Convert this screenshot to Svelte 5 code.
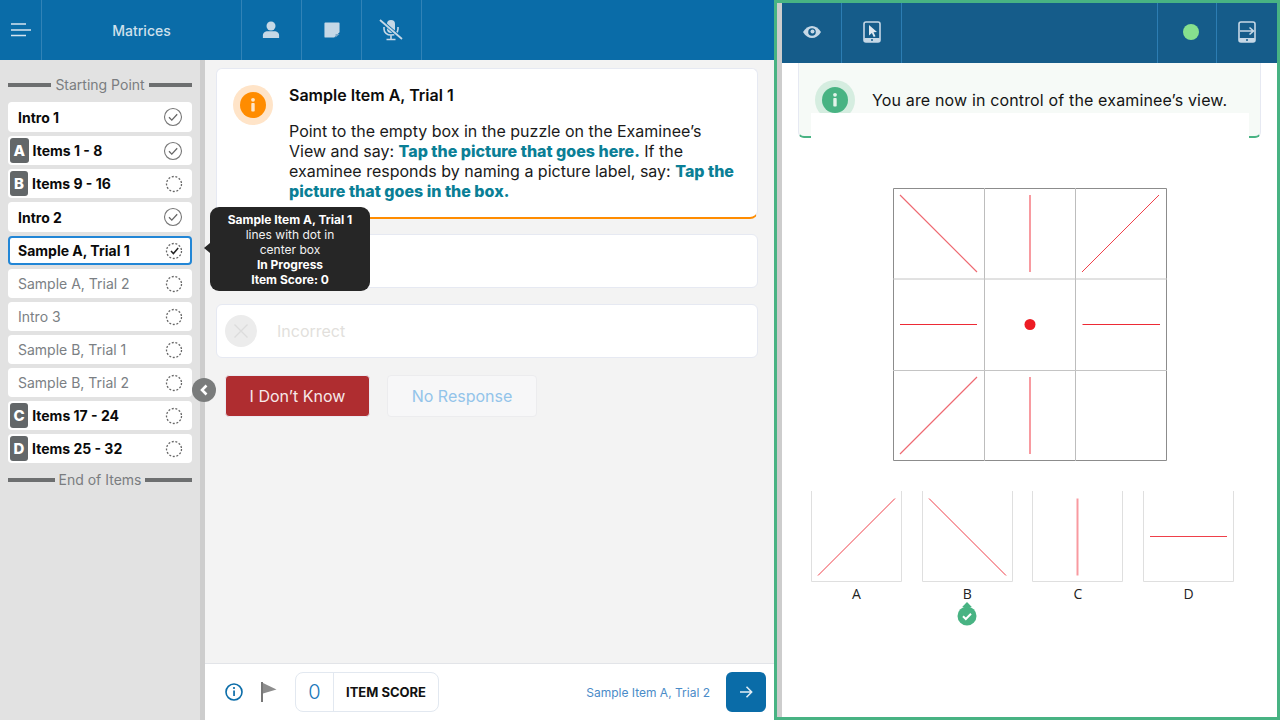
<script lang="ts">
  type Row = { label: string; badge?: string; state: "done" | "todo" | "current"; tone: "strong" | "muted" };

  const rows: Row[] = [
    { label: "Intro 1", state: "done", tone: "strong" },
    { label: "Items 1 - 8", badge: "A", state: "done", tone: "strong" },
    { label: "Items 9 - 16", badge: "B", state: "todo", tone: "strong" },
    { label: "Intro 2", state: "done", tone: "strong" },
    { label: "Sample A, Trial 1", state: "current", tone: "strong" },
    { label: "Sample A, Trial 2", state: "todo", tone: "muted" },
    { label: "Intro 3", state: "todo", tone: "muted" },
    { label: "Sample B, Trial 1", state: "todo", tone: "muted" },
    { label: "Sample B, Trial 2", state: "todo", tone: "muted" },
    { label: "Items 17 - 24", badge: "C", state: "todo", tone: "strong" },
    { label: "Items 25 - 32", badge: "D", state: "todo", tone: "strong" }
  ];

  const choices = [
    { label: "A", x1: 7, y1: 84.5, x2: 84, y2: 7.5 },
    { label: "B", x1: 7, y1: 7.5, x2: 84, y2: 84.5 },
    { label: "C", x1: 45.5, y1: 7.5, x2: 45.5, y2: 84.5 },
    { label: "D", x1: 7, y1: 45.5, x2: 84, y2: 45.5 }
  ];

  // the plain section rows sit one pixel taller than the rest
  const isTall = (r: Row) => r.tone === "strong" && !r.badge && r.state !== "current";
</script>

<div class="page">
  <section class="left">
    <header class="topbar">
      <div class="cell burger">
        <svg width="22" height="16" viewBox="0 0 22 16">
          <path d="M1 2h15M1 8h20M1 13.500h15" stroke="#d5e4ef" stroke-width="1.700" fill="none" />
        </svg>
      </div>
      <div class="cell title">Matrices</div>
      <div class="cell icon">
        <svg class="shift-l" width="18" height="18" viewBox="0 0 20 20" fill="#c6d8e6">
          <circle cx="10" cy="5.500" r="5" />
          <path d="M1 19v-3c0-3 3-4.500 5-4.500h8c2 0 5 1.500 5 4.500v3z" />
        </svg>
      </div>
      <div class="cell icon">
        <svg width="16" height="16" viewBox="0 0 18 18">
          <path d="M1.500 0.500h15a1 1 0 0 1 1 1v10l-6 6h-10a1 1 0 0 1-1-1v-15a1 1 0 0 1 1-1z" fill="#c6d8e6" />
          <path d="M13 17.500v-4h4.500z" fill="#7fa9c8" />
        </svg>
      </div>
      <div class="cell icon">
        <svg class="shift-l" width="26" height="22" viewBox="0 0 26 22" fill="none">
          <rect x="9" y="1" width="8" height="13" rx="4" fill="#c6d8e6" />
          <path d="M6 8v2c0 3.500 3 6 7 6s7-2.500 7-6V8M13 16v4M8.500 20.500h9" stroke="#c6d8e6" stroke-width="1.600" />
          <path d="M2 1l22 19" stroke="#0a6ca8" stroke-width="3.600" />
          <path d="M2 1l22 19" stroke="#c6d8e6" stroke-width="1.800" />
        </svg>
      </div>
    </header>

    <div class="body">
      <aside class="sidebar">
        <div class="rule rule-top"><span>Starting Point</span></div>
        <ul class="rows">
          {#each rows as r}
            <li class={"row " + r.tone + (r.state === "current" ? " active" : "") + (r.badge ? " has-badge" : "") + (isTall(r) ? " tall" : "")}>
              {#if r.badge}<span class="badge">{r.badge}</span>{/if}
              <span class="row-label">{r.label}</span>
              <svg class="status" width="20" height="20" viewBox="0 0 20 20" fill="none">
                {#if r.state === "done"}
                  <circle cx="10" cy="10" r="8.500" stroke="#777" stroke-width="1.100" />
                  <path d="M6 10.300l2.800 2.800 5.400-5.800" stroke="#666" stroke-width="1.300" />
                {:else}
                  <circle cx="11" cy="10" r="7.500" stroke="#666" stroke-width="1.300" stroke-dasharray="2 1.650" />
                  {#if r.state === "current"}
                    <path d="M8 10l2.400 2.600 4.800-5.600" stroke="#222" stroke-width="1.500" />
                  {/if}
                {/if}
              </svg>
            </li>
          {/each}
        </ul>
        <div class="rule rule-end"><span>End of Items</span></div>
      </aside>

      <main class="main">
        <div class="scroll">
          <article class="card prompt">
            <span class="halo orange">
              <svg width="26" height="26" viewBox="0 0 26 26">
                <circle cx="13" cy="13" r="13" fill="#ff8c00" />
                <rect x="11.300" y="11" width="3.400" height="8.500" rx="0.800" fill="#ffe6c8" />
                <circle cx="13" cy="7.800" r="1.900" fill="#ffe6c8" />
              </svg>
            </span>
            <div class="prompt-text">
              <h2>Sample Item A, Trial 1</h2>
              <p>Point to the empty box in the puzzle on the Examinee’s View and say: <b>Tap the picture that goes here.</b> If the examinee responds by naming a picture label, say: <b>Tap the picture that goes in the box.</b></p>
            </div>
          </article>

          <div class="card answer"></div>

          <div class="card answer incorrect">
            <span class="disc">
              <svg width="16" height="16" viewBox="0 0 16 16">
                <path d="M1.500 1.500l13 13M14.500 1.500l-13 13" stroke="#dcdcdc" stroke-width="1.400" />
              </svg>
            </span>
            <span class="answer-label">Incorrect</span>
          </div>

          <div class="actions">
            <button class="btn dont-know">I Don’t Know</button>
            <button class="btn no-response">No Response</button>
          </div>
        </div>

        <footer class="footer">
          <svg width="18" height="18" viewBox="0 0 18 18" fill="none">
            <circle cx="9" cy="9" r="8" stroke="#0a6ca8" stroke-width="1.600" />
            <rect x="8.200" y="7.500" width="1.700" height="5.500" fill="#0a6ca8" />
            <circle cx="9" cy="5" r="1.100" fill="#0a6ca8" />
          </svg>
          <svg class="flag" width="16" height="20" viewBox="0 0 16 20">
            <rect x="0" y="0" width="2" height="20" fill="#777" />
            <path d="M2 1l13.500 6.500-13.500 4z" fill="#8d8d8d" />
          </svg>
          <div class="score">
            <span class="score-value">0</span>
            <span class="score-label">ITEM SCORE</span>
          </div>
          <span class="next-label">Sample Item A, Trial 2</span>
          <button class="next" aria-label="Next">
            <svg width="14" height="14" viewBox="0 0 14 14" fill="none">
              <path d="M1 7h11.500M7.500 1.800L12.700 7l-5.200 5.200" stroke="#e4eef5" stroke-width="1.500" />
            </svg>
          </button>
        </footer>
      </main>
    </div>

    <div class="tooltip">
      <b>Sample Item A, Trial 1</b>
      <span>lines with dot in</span>
      <span>center box</span>
      <b>In Progress</b>
      <b>Item Score: 0</b>
    </div>
    <button class="collapse" aria-label="Collapse">
      <svg width="10" height="12" viewBox="0 0 10 12" fill="none">
        <path d="M7.500 1.500L3 6l4.500 4.500" stroke="#fff" stroke-width="2.600" />
      </svg>
    </button>
  </section>

  <section class="right">
    <div class="inner">
      <header class="topbar2">
        <div class="cell2">
          <svg width="18" height="12" viewBox="0 0 18 12">
            <path d="M0 6C2.500 2 5.500 0 9 0s6.500 2 9 6c-2.500 4-5.500 6-9 6s-6.500-2-9-6z" fill="#c6d8e6" />
            <circle cx="9" cy="6" r="3.800" fill="#155c8a" />
            <circle cx="9.500" cy="5.500" r="2" fill="#c6d8e6" />
          </svg>
        </div>
        <div class="cell2">
          <svg width="18" height="22" viewBox="0 0 18 22">
            <rect x="1" y="1" width="16" height="20" rx="2" fill="none" stroke="#c6d8e6" stroke-width="1.600" />
            <rect x="1" y="17" width="16" height="4" rx="1" fill="#c6d8e6" />
            <circle cx="9" cy="19" r="1" fill="#155c8a" />
            <path d="M6 4l8 7-3.500.3 2 4-1.800.8-1.800-4-2.900 2.400z" fill="#e0e9f0" />
          </svg>
        </div>
        <div class="spacer"></div>
        <div class="cell2 live"><span class="dot"></span></div>
        <div class="cell2 last">
          <svg width="18" height="22" viewBox="0 0 18 22" fill="none">
            <rect x="1" y="1" width="16" height="20" rx="2" stroke="#c6d8e6" stroke-width="1.600" />
            <rect x="1" y="17" width="16" height="4" rx="1" fill="#c6d8e6" />
            <circle cx="9" cy="19" r="1" fill="#155c8a" />
            <path d="M2 10h13.500M11.500 6.500L15.500 10l-4 3.500" stroke="#c6d8e6" stroke-width="1.600" />
          </svg>
        </div>
      </header>

      <div class="stage">
        <div class="banner">
          <span class="halo green">
            <svg width="26" height="26" viewBox="0 0 26 26">
              <circle cx="13" cy="13" r="13" fill="#48b383" />
              <rect x="11.300" y="11" width="3.400" height="8.500" rx="0.800" fill="#e3f4ea" />
              <circle cx="13" cy="7.800" r="1.900" fill="#e3f4ea" />
            </svg>
          </span>
          <span class="banner-text">You are now in control of the examinee’s view.</span>
          <div class="banner-mask"></div>
        </div>

        <svg class="puzzle" width="276" height="275" viewBox="892 187 276 275" fill="none">
          <path d="M893.500 188.500h273v272h-273z" stroke="#8c8c8c" />
          <path d="M984.500 188v273M1075.500 188v273" stroke="#bdbdbd" />
          <path d="M893 279h274M893 370.500h274" stroke="#c4c4c4" />
          <g stroke="#ed2a35">
            <path d="M900 195l77 77M900 454l77-77" stroke="#ee6a72" stroke-width="1.200" />
            <path d="M1082 272l77-77" stroke-width="0.900" />
            <path d="M1030 195v77M1030 377v77" stroke="#f89aa0" stroke-width="2" />
            <path d="M900 324.500h77M1082.500 324.500h77.500" stroke-width="1.200" />
          </g>
          <circle cx="1030" cy="324.500" r="5.500" fill="#ed1c24" />
        </svg>

        <div class="choices">
          {#each choices as c}
            <div class="choice">
              <svg width="91" height="91" viewBox="0 0 91 91" fill="none">
                <path d="M0.500 0v90.500h90V0" stroke="#dfdfdf" />
                <line x1={c.x1} y1={c.y1} x2={c.x2} y2={c.y2} stroke={c.label === "C" ? "#f89aa0" : "#ed2a35"} stroke-width={c.label === "C" ? 2 : 0.9} />
              </svg>
              <span class="choice-label">{c.label}</span>
              {#if c.label === "B"}
                <svg class="picked" width="20" height="24" viewBox="0 0 20 24">
                  <path d="M10 0l4.800 5h-9.600z" fill="#48b383" />
                  <circle cx="10" cy="14" r="9.500" fill="#48b383" />
                  <path d="M6 14.300l2.800 2.700 5.200-5.200" stroke="#fff" stroke-width="2" fill="none" />
                </svg>
              {/if}
            </div>
          {/each}
        </div>
      </div>
    </div>
  </section>
</div>

<style>
  :global(body) {
    margin: 0;
    font-family: Inter, "Liberation Sans", sans-serif;
    color: #111;
    overflow: hidden;
  }

  .page {
    width: 1280px;
    height: 720px;
    display: flex;
    overflow: hidden;
  }

  .left {
    position: relative;
    width: 774px;
    height: 720px;
    display: flex;
    flex-direction: column;
    flex: none;
  }

  .topbar {
    height: 60px;
    flex: none;
    display: flex;
    background: #0a6ca8;
  }
  .cell {
    display: flex;
    align-items: center;
    justify-content: center;
    border-right: 1px solid #3183b7;
    box-sizing: border-box;
  }
  .burger { width: 42px; }
  .title { width: 200px; color: #cfe0ec; font-size: 14px; font-weight: 500; }
  .icon { width: 60px; }
  .shift-l { margin-right: 2px; }

  .body { flex: 1; display: flex; min-height: 0; }

  .sidebar {
    flex: none;
    background: #e2e2e2;
    border-right: 5px solid #cdcdcd;
    padding: 16px 8px 0;
    box-sizing: content-box;
    width: 184px;
  }

  .rule {
    display: flex;
    align-items: center;
    gap: 4px;
    color: #7a7d80;
    font-size: 14px;
    line-height: 17px;
    white-space: nowrap;
  }
  .rule::before, .rule::after {
    content: "";
    flex: 1;
    height: 4px;
    background: #6d6f70;
  }
  .rule-end { margin-top: 8px; }

  .rows {
    list-style: none;
    margin: 9px 0 0;
    padding: 0;
    display: flex;
    flex-direction: column;
    gap: 4px;
  }
  .row {
    height: 29px;
    box-sizing: border-box;
    background: #fff;
    border-radius: 4px;
    display: flex;
    align-items: center;
    padding-left: 10px;
    font-size: 14px;
    position: relative;
  }
  .row.tall { height: 30px; }
  .row.strong { font-weight: 700; color: #0a0a0a; }
  .row.muted { color: #7b7f84; }
  .row.active { border: 2px solid #2286d6; padding-left: 8px; }
  .row.has-badge { padding-left: 2px; }
  .status { margin-left: auto; margin-right: 9px; }
  .row.active .status { margin-right: 7px; }

  .badge {
    align-self: stretch;
    margin: 2px 4px 2px 0;
    padding: 0 3.500px;
    min-width: 11px;
    background: #636769;
    border-radius: 3px;
    color: #fff;
    font-size: 15px;
    font-weight: 800;
    display: flex;
    align-items: center;
    justify-content: center;
  }

  .main {
    flex: 1;
    background: #f3f3f3;
    display: flex;
    flex-direction: column;
    min-width: 0;
  }
  .scroll {
    flex: 1;
    padding: 8px 16px 0 11px;
    display: flex;
    flex-direction: column;
    gap: 15px;
  }

  .card {
    background: #fff;
    border: 1px solid #e6e9f2;
    border-radius: 6px;
    box-sizing: border-box;
  }
  .prompt {
    height: 151px;
    display: flex;
    padding: 16px 20px 0 16px;
    gap: 16px;
    border-bottom: 2px solid #ff8c00;
    border-bottom-right-radius: 8px;
  }
  .halo {
    width: 40px;
    height: 40px;
    border-radius: 50%;
    flex: none;
    display: flex;
    align-items: center;
    justify-content: center;
  }
  .halo.orange { background: #ffe4c8; }
  .halo.green { background: #d5ede0; }
  .prompt-text h2 {
    margin: 0;
    font-size: 16px;
    font-weight: 600;
    line-height: 20px;
    color: #0c0c0c;
  }
  .prompt-text p {
    margin: 16px 0 0;
    font-size: 16px;
    line-height: 20px;
    color: #1a1a1a;
  }
  .prompt-text b { color: #0b7f96; font-weight: 800; }

  .answer {
    height: 54px;
    display: flex;
    align-items: center;
    padding-left: 8px;
  }
  .answer.incorrect { margin-top: 1px; }
  .disc {
    width: 32px;
    height: 32px;
    border-radius: 50%;
    background: #ececec;
    display: flex;
    align-items: center;
    justify-content: center;
    flex: none;
  }
  .answer-label { margin-left: 20px; font-size: 16px; color: #e2dfdc; font-weight: 400; }

  .actions {
    display: flex;
    gap: 17px;
    padding-left: 9px;
    margin-top: 2px;
  }
  .btn {
    height: 42px;
    font: inherit;
    font-size: 16px;
    border-radius: 4px;
    box-sizing: border-box;
  }
  .dont-know {
    width: 145px;
    background: #af2d30;
    color: #f6e8e8;
    border: 1px solid #eceaf2;
  }
  .no-response {
    width: 150px;
    background: #f7f7f8;
    color: #93c4ea;
    border: 1px solid #ececee;
  }

  .footer {
    height: 57px;
    flex: none;
    background: #fff;
    border-top: 1px solid #e2e4e8;
    box-sizing: border-box;
    display: flex;
    align-items: center;
    padding: 0 8px 0 20px;
  }
  .flag { margin-left: 18px; }
  .score {
    margin-left: 18px;
    width: 144px;
    height: 40px;
    border: 1px solid #e2e8f0;
    border-radius: 8px;
    box-sizing: border-box;
    display: flex;
    align-items: center;
  }
  .score-value {
    width: 37px;
    height: 100%;
    border-right: 1px solid #e2e8f0;
    display: flex;
    align-items: center;
    justify-content: center;
    font-size: 20px;
    color: #1a78ba;
    font-weight: 300;
  }
  .score-label { margin-left: 12px; font-size: 13px; font-weight: 700; color: #111; }
  .next-label { margin-left: auto; font-size: 12px; color: #4a8bc8; margin-right: 16px; }
  .next {
    width: 40px;
    height: 40px;
    border: 0;
    border-radius: 6px;
    background: #0a6ca8;
    display: flex;
    align-items: center;
    justify-content: center;
    padding: 0;
  }

  .tooltip {
    position: absolute;
    left: 210px;
    top: 207px;
    width: 160px;
    height: 84px;
    box-sizing: border-box;
    padding: 5px 6px;
    background: #262626;
    border-radius: 9px;
    color: #f2f2f2;
    font-size: 12px;
    line-height: 15px;
    display: flex;
    flex-direction: column;
    align-items: center;
    white-space: nowrap;
  }
  .tooltip b { font-weight: 700; color: #fff; }
  .tooltip::before {
    content: "";
    position: absolute;
    left: -6px;
    top: 36px;
    border-style: solid;
    border-width: 5px 6px 5px 0;
    border-color: transparent #262626 transparent transparent;
  }

  .collapse {
    position: absolute;
    left: 192px;
    top: 378px;
    width: 24px;
    height: 24px;
    border: 0;
    border-radius: 50%;
    padding: 0;
    background: #7a7c7c;
    display: flex;
    align-items: center;
    justify-content: center;
  }

  .right {
    flex: 1;
    border: 3px solid #48b383;
    box-sizing: border-box;
    height: 720px;
    background: #fff;
  }
  .inner {
    height: 100%;
    border-left: 5px solid #cdcdcd;
    box-sizing: border-box;
    display: flex;
    flex-direction: column;
  }
  .topbar2 {
    height: 60px;
    flex: none;
    background: #155c8a;
    display: flex;
  }
  .cell2 {
    width: 60px;
    flex: none;
    border-right: 1px solid #2c7db3;
    box-sizing: border-box;
    display: flex;
    align-items: center;
    justify-content: center;
    padding-bottom: 3px;
  }
  .spacer { flex: 1; border-right: 1px solid #2c7db3; }
  .cell2.live { width: 59px; padding-left: 8px; }
  .cell2.last { border-right: 0; }
  .dot { width: 16px; height: 16px; border-radius: 50%; background: #86e08e; }

  .stage {
    flex: 1;
    display: flex;
    flex-direction: column;
    align-items: flex-start;
    padding-left: 16px;
  }

  .banner {
    position: relative;
    width: 463px;
    height: 75px;
    box-sizing: border-box;
    background: #f6faf7;
    border: 1px solid #e6e9f2;
    border-top: 0;
    border-bottom: 2px solid #48b383;
    border-radius: 0 0 6px 6px;
    display: flex;
    align-items: flex-start;
    padding: 17px 0 0 16px;
    gap: 17px;
    flex: none;
  }
  .banner-text { font-size: 16px; line-height: 41px; letter-spacing: 0.15px; color: #141414; white-space: nowrap; }
  .banner-mask {
    position: absolute;
    left: 12px;
    right: 11px;
    top: 50px;
    bottom: -2px;
    background: #fff;
  }

  .puzzle { display: block; margin: 49px 0 0 94px; }

  .choices {
    display: flex;
    gap: 19.670px;
    margin: 29px 0 0 13px;
  }
  .choice {
    position: relative;
    width: 91px;
    display: flex;
    flex-direction: column;
    align-items: center;
  }
  .choice svg { display: block; }
  .choice-label {
    margin-top: 3px;
    font-family: "Open Sans", sans-serif;
    font-size: 14px;
    line-height: 18px;
    color: #222;
  }
  .picked { position: absolute; left: 35px; top: 111px; }
</style>
